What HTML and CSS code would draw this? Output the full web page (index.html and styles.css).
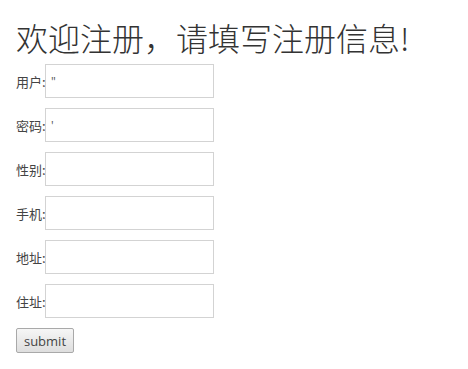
FILE: index.html
```html
<!DOCTYPE html>
<html lang="zh-CN">
<head>
<meta charset="utf-8">
<title>注册</title>
<link rel="stylesheet" href="styles.css">
</head>
<body>
<div class="page">
  <h1 class="title">欢迎注册，请填写注册信息!</h1>
  <form class="form">
    <div class="row"><label class="label">用户:</label><input class="field" type="text" value='"'></div>
    <div class="row"><label class="label">密码:</label><input class="field" type="text" value="'"></div>
    <div class="row"><label class="label">性别:</label><input class="field" type="text"></div>
    <div class="row"><label class="label">手机:</label><input class="field" type="text"></div>
    <div class="row"><label class="label">地址:</label><input class="field" type="text"></div>
    <div class="row"><label class="label">住址:</label><input class="field" type="text"></div>
    <div class="actions"><button class="submit" type="button">submit</button></div>
  </form>
</div>
</body>
</html>
```

FILE: styles.css
```css
html, body {
  margin: 0;
  padding: 0;
  background: #ffffff;
}
body {
  font-family: "Open Sans", "Noto Sans CJK SC", sans-serif;
  color: #333333;
}
.page {
  padding: 0 16px;
}
.title {
  margin: 20px 0 9px;
  font-family: "Noto Sans CJK SC", "Noto Sans", sans-serif;
  font-size: 32px;
  font-weight: 300;
  line-height: 35px;
  color: #333333;
}
.form {
  margin: 0;
}
.row {
  display: flex;
  align-items: center;
  height: 34px;
  margin-bottom: 10px;
}
.label {
  font-family: "Noto Sans CJK SC", sans-serif;
  font-size: 13px;
  font-weight: 400;
  color: #444444;
  width: 29px;
  white-space: nowrap;
}
.field {
  box-sizing: border-box;
  width: 169px;
  height: 34px;
  margin: 0;
  padding: 0 5px;
  border: 1px solid #d3d3d3;
  background: #ffffff;
  font-family: "Open Sans", sans-serif;
  font-size: 12px;
  color: #555555;
  outline: none;
}
.actions {
  display: flex;
}
.submit {
  box-sizing: border-box;
  width: 58px;
  height: 25px;
  padding: 0;
  border: 1px solid #a9a9a9;
  border-radius: 2px;
  background: linear-gradient(#f6f6f6, #dedede);
  font-family: "Open Sans", sans-serif;
  font-size: 13px;
  color: #444444;
}
```
